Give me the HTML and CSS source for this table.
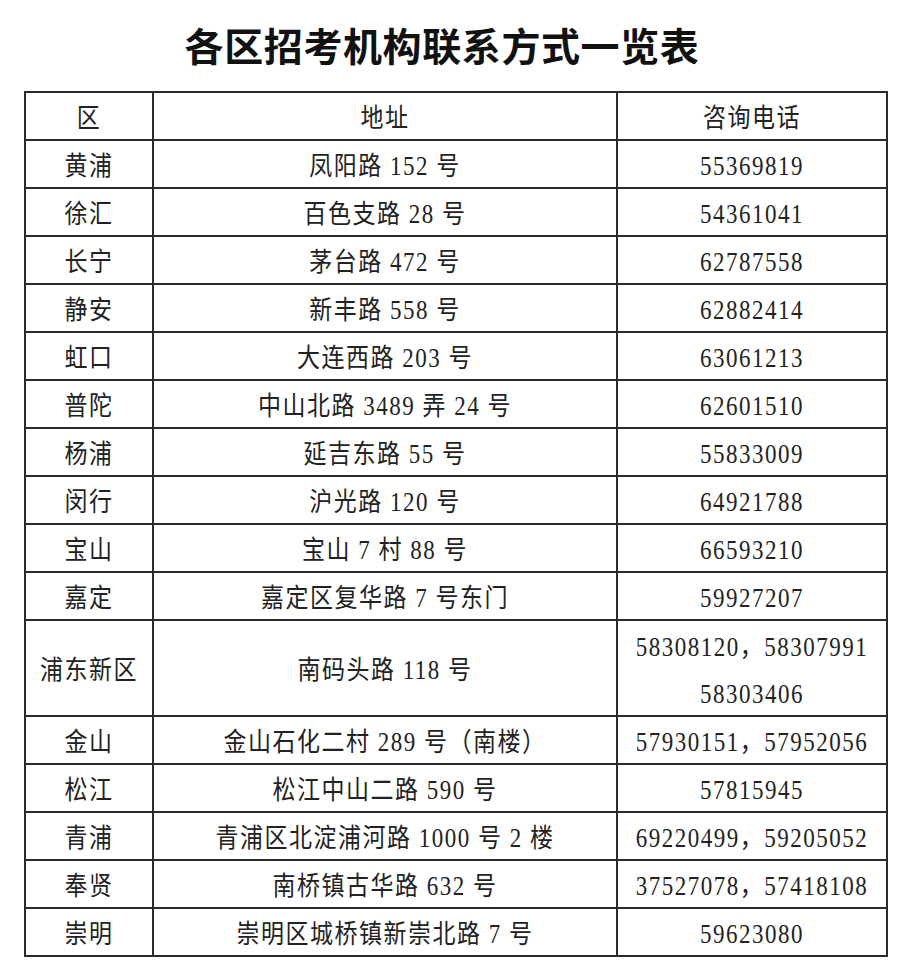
FILE: index.html
```html
<!DOCTYPE html>
<html lang="zh-CN">
<head>
<meta charset="utf-8">
<title>各区招考机构联系方式一览表</title>
<link rel="stylesheet" href="styles.css">
</head>
<body>
<header class="title-bar"><h1 class="title">各区招考机构联系方式一览表</h1></header>
<table class="contacts">
  <colgroup><col class="c-dist"><col class="c-addr"><col class="c-tel"></colgroup>
  <thead>
    <tr><th><span class="t">区</span></th><th><span class="t">地址</span></th><th><span class="t">咨询电话</span></th></tr>
  </thead>
  <tbody>
    <tr><td><span class="t">黄浦</span></td><td><span class="t">凤阳路 152 号</span></td><td><span class="t">55369819</span></td></tr>
    <tr><td><span class="t">徐汇</span></td><td><span class="t">百色支路 28 号</span></td><td><span class="t">54361041</span></td></tr>
    <tr><td><span class="t">长宁</span></td><td><span class="t">茅台路 472 号</span></td><td><span class="t">62787558</span></td></tr>
    <tr><td><span class="t">静安</span></td><td><span class="t">新丰路 558 号</span></td><td><span class="t">62882414</span></td></tr>
    <tr><td><span class="t">虹口</span></td><td><span class="t">大连西路 203 号</span></td><td><span class="t">63061213</span></td></tr>
    <tr><td><span class="t">普陀</span></td><td><span class="t">中山北路 3489 弄 24 号</span></td><td><span class="t">62601510</span></td></tr>
    <tr><td><span class="t">杨浦</span></td><td><span class="t">延吉东路 55 号</span></td><td><span class="t">55833009</span></td></tr>
    <tr><td><span class="t">闵行</span></td><td><span class="t">沪光路 120 号</span></td><td><span class="t">64921788</span></td></tr>
    <tr><td><span class="t">宝山</span></td><td><span class="t">宝山 7 村 88 号</span></td><td><span class="t">66593210</span></td></tr>
    <tr><td><span class="t">嘉定</span></td><td><span class="t">嘉定区复华路 7 号东门</span></td><td><span class="t">59927207</span></td></tr>
    <tr class="tall"><td><span class="t">浦东新区</span></td><td><span class="t">南码头路 118 号</span></td><td><span class="t multi">58308120，58307991<br>58303406</span></td></tr>
    <tr><td><span class="t">金山</span></td><td><span class="t">金山石化二村 289 号（南楼）</span></td><td><span class="t">57930151，57952056</span></td></tr>
    <tr><td><span class="t">松江</span></td><td><span class="t">松江中山二路 590 号</span></td><td><span class="t">57815945</span></td></tr>
    <tr><td><span class="t">青浦</span></td><td><span class="t">青浦区北淀浦河路 1000 号 2 楼</span></td><td><span class="t">69220499，59205052</span></td></tr>
    <tr><td><span class="t">奉贤</span></td><td><span class="t">南桥镇古华路 632 号</span></td><td><span class="t">37527078，57418108</span></td></tr>
    <tr><td><span class="t">崇明</span></td><td><span class="t">崇明区城桥镇新崇北路 7 号</span></td><td><span class="t">59623080</span></td></tr>
  </tbody>
</table>
</body>
</html>
```

FILE: styles.css
```css
html, body {
  margin: 0;
  padding: 0;
  background: #ffffff;
}

body {
  width: 912px;
  height: 973px;
  overflow: hidden;
  font-family: "Liberation Serif", "Noto Sans CJK SC", serif;
  color: #222222;
}

.title-bar {
  height: 91px;
  display: flex;
  align-items: center;
  justify-content: center;
  padding-right: 28px;
  box-sizing: border-box;
}

.title {
  margin: 0 0 2px 0;
  font-family: "Noto Sans CJK SC", sans-serif;
  font-weight: 700;
  font-size: 39px;
  line-height: 1;
  letter-spacing: 0.6px;
  color: #111111;
}

.contacts {
  margin-left: 24px;
  width: 862px;
  border-collapse: collapse;
  table-layout: fixed;
}

.c-dist { width: 128px; }
.c-addr { width: 464px; }
.c-tel { width: 270px; }

.contacts th,
.contacts td {
  border: 2px solid #2b2b2b;
  height: 46px;
  padding: 0;
  text-align: center;
  vertical-align: middle;
  font-weight: 400;
  font-size: 23px;
  white-space: nowrap;
  letter-spacing: 1.5px;
}

.t {
  display: inline-block;
  line-height: 40px;
  transform: translateY(3px) scaleY(1.15);
}

.tall td { height: 94px; }

.t.multi { line-height: 41px; }
```
